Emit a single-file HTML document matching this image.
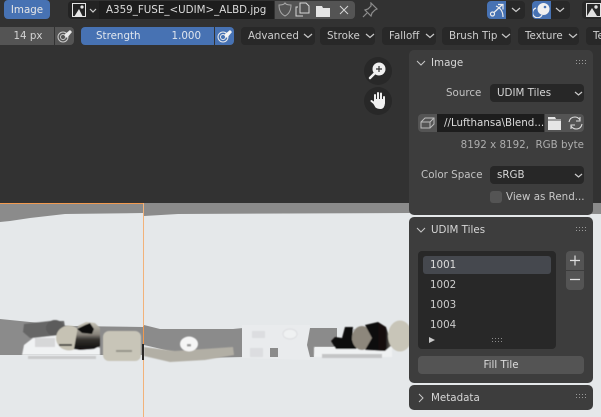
<!DOCTYPE html>
<html><head><meta charset="utf-8"><style>
*{box-sizing:border-box}
html,body{margin:0;padding:0}
body{width:601px;height:417px;overflow:hidden;background:#323232;position:relative;font-family:"DejaVu Sans",sans-serif;font-size:10.3px;color:#d6d6d6}
.a{position:absolute;white-space:nowrap}
.b{position:absolute;height:18px;background:#282828;border-radius:4px;line-height:18px;white-space:nowrap;color:#cecece;overflow:hidden}
.g{position:absolute;height:18px;background:#545454;line-height:18px;white-space:nowrap}
svg.o{position:absolute;left:0;top:0}
.p{position:absolute;left:409px;width:184px;background:#3d3d3d;border-radius:5px}
.t{position:absolute;white-space:nowrap;color:#d6d6d6}
</style></head><body>
<svg class="o" width="601" height="417" viewBox="0 0 601 417">
<defs><filter id="s" x="-5%" y="-5%" width="110%" height="110%"><feGaussianBlur stdDeviation="0.6"/></filter>
<linearGradient id="k" x1="0" y1="0" x2="1" y2="0"><stop offset="0" stop-color="#0d0b0a"/><stop offset=".75" stop-color="#141110"/><stop offset="1" stop-color="#8d877c"/></linearGradient>
<linearGradient id="h" x1="0" y1="0" x2="0" y2="1"><stop offset="0" stop-color="#c6c3b6"/><stop offset=".45" stop-color="#86827a"/><stop offset=".62" stop-color="#35322f"/><stop offset="1" stop-color="#0d0b0a"/></linearGradient></defs>
<rect x="0" y="47" width="601" height="156" fill="#323232"/>
<rect x="0" y="203" width="601" height="214" fill="#8b8b8b"/>
<polygon points="0,222 10,221 30,218 65,214 143,213 143,417 0,417" fill="#e5e8ea"/>
<polygon points="144,216 178,214 410,213 601,214 601,417 144,417" fill="#e5e8ea"/>
<polygon points="0,319 30,322 70,326 143,327 143,355 0,355" fill="#8b8b8b"/>
<polygon points="144,325 160,329 233,329 243,328 243,357 200,358 144,345" fill="#8b8b8b"/>
<polygon points="242,325 310,325 310,360 242,358" fill="#e9ebed"/>
<polygon points="310,328 337,328 337,347 315,347 314,357 310,357 307,345" fill="#8b8b8b"/>
<g filter="url(#s)">
<polygon points="144,347 175,351 233,347 234,355 205,360 170,362 144,356" fill="#b2afa5"/>
<polygon points="24,324 50,321 64,321 66,333 50,337 30,338 23,332" fill="#666"/>
<ellipse cx="55" cy="328" rx="9" ry="8" fill="#5c5c5c"/>
<polygon points="33,338 60,335 100,348 100,355 22,355 24,345" fill="#f0f2f3"/>
<rect x="35" y="338" width="20" height="9" fill="#d6d7d8"/>
<rect x="28" y="356" width="68" height="3" fill="#c9cacb"/>
<ellipse cx="69" cy="338" rx="13" ry="12.500" fill="#c6c2b4"/>
<rect x="59" y="344" width="13" height="2" fill="#4d4b46"/>
<polygon points="78,326 86,322 95,323 100,328 100,346 94,349 80,350 74,349" fill="url(#h)"/>
<polygon points="77,329 85,325 90,323 94,329 92,334 82,333" fill="#0c0b0a"/>
<rect x="103" y="331" width="38" height="30" rx="6" fill="#c8c5b8"/>
<rect x="116" y="350" width="16" height="2" fill="#96948a"/>
<rect x="252" y="331" width="13" height="7" fill="#dcdde0"/>
<rect x="250" y="348" width="13" height="9" fill="#dcdde0"/>
<ellipse cx="290" cy="334" rx="7" ry="5" fill="#eff1f2" stroke="#dcdde0"/>
<rect x="314" y="347" width="78" height="10" fill="#eff1f2"/>
<rect x="322" y="354" width="60" height="4" fill="#c4c5c6"/>
<polygon points="331,341 335,337 342,338 345,327 353,327 352,340 358,346 356,349 336,349" fill="#0f0d0c"/>
<ellipse cx="362" cy="338" rx="10" ry="12" fill="#8d877c"/>
<polygon points="365,325 378,322 386,327 392,345 385,351 365,350 372,338" fill="url(#k)"/>
<ellipse cx="354" cy="330" rx="1" ry="1" fill="#aaa"/>
<ellipse cx="400" cy="336" rx="12" ry="15.500" fill="#c8c5b8"/>
<ellipse cx="189" cy="344" rx="9" ry="7.500" fill="#f5f5f5"/>
<rect x="187" y="344" width="4" height="2.500" fill="#9a9a9a"/>
</g>
<rect x="270" y="348" width="8" height="9" fill="#8b8b8b"/>
<rect x="0" y="203" width="143" height="1" fill="#f29a50"/>
<rect x="143" y="203" width="1" height="214" fill="#f2b27a"/>
<rect x="143" y="326" width="1" height="18" fill="#f09a50"/>
<rect x="142" y="344" width="2" height="16" fill="#2a2826"/>
</svg>

<!-- top bar -->
<div class="a" style="left:0;top:0;width:601px;height:47px;background:#323232"></div>
<div class="a" style="left:4px;top:0;width:46px;height:19px;background:#4772b3;border-radius:4px;text-align:center;line-height:20px;color:#e6e6e6">Image</div>
<div class="a" style="left:68px;top:1px;width:32px;height:18px;background:#232323;border-radius:4px 0 0 4px"></div>
<svg class="a" style="left:71px;top:2px" width="28" height="16" viewBox="0 0 28 16"><path d="M1.500 1.500h13v13h-13z" fill="none" stroke="#e6e6e6"/><path d="M3 15l5-8 4 8z" fill="#e6e6e6"/><circle cx="11" cy="5" r="1.600" fill="#e6e6e6"/><path d="M19 7l3 3 3-3" fill="none" stroke="#ccc" stroke-width="1.200"/></svg>
<div class="a" style="left:99px;top:1px;width:175px;height:18px;background:#1d1d1d;line-height:19px;padding-left:7px;color:#dcdcdc;overflow:hidden">A359_FUSE_&lt;UDIM&gt;_ALBD.jpg</div>
<div class="a" style="left:275px;top:1px;width:80px;height:18px;background:#545454;border-radius:0 4px 4px 0"></div>
<svg class="a" style="left:276px;top:2px" width="90" height="16" viewBox="0 0 90 16" fill="none" stroke="#d6d6d6"><path d="M3 3q5 0 6-2q1 2 6 2q0 8-6 11q-6-3-6-11z" stroke="#a8a8a8"/><path d="M22 5h-2v9h7M24 1h6l3 3v7h-9z"/><path d="M40 4h6l1 2h7v9H40z" fill="#e4e4e4" stroke="none"/><path d="M64 4l8 8M72 4l-8 8"/></svg>
<svg class="a" style="left:362px;top:2px" width="16" height="16" viewBox="0 0 16 16" fill="none" stroke="#8d8d8d" stroke-width="1.200"><path d="M9 1l6 6-2 1-3 3-1 3-6-6 3-1 3-3zM5 11l-4 4"/></svg>

<div class="a" style="left:487px;top:1px;width:19px;height:18px;background:#4772b3;border-radius:4px 0 0 4px"></div>
<svg class="a" style="left:488px;top:2px" width="18" height="16" viewBox="0 0 18 16" fill="none" stroke="#eee" stroke-width="1.200"><circle cx="4.500" cy="12" r="2"/><path d="M6 10.500L14 3M10 2.500h5v5M8 4q7 3 7 11"/></svg>
<div class="a" style="left:506px;top:1px;width:19px;height:18px;background:#282828;border-radius:0 4px 4px 0"></div>
<svg class="a" style="left:511px;top:7px" width="10" height="6" viewBox="0 0 10 6"><path d="M1 1l4 3.500L9 1" fill="none" stroke="#ccc" stroke-width="1.200"/></svg>
<div class="a" style="left:532px;top:1px;width:19px;height:18px;background:#4772b3;border-radius:4px 0 0 4px"></div>
<svg class="a" style="left:533px;top:2px" width="18" height="16" viewBox="0 0 18 16"><circle cx="10.500" cy="7" r="6" fill="#f0f0f0"/><circle cx="12" cy="5" r="1.300" fill="#4772b3"/><path d="M3 6a5 5 0 1 0 6 7" fill="none" stroke="#eee" stroke-width="1.300"/></svg>
<div class="a" style="left:551px;top:1px;width:19px;height:18px;background:#282828;border-radius:0 4px 4px 0"></div>
<svg class="a" style="left:555px;top:7px" width="10" height="6" viewBox="0 0 10 6"><path d="M1 1l4 3.500L9 1" fill="none" stroke="#ccc" stroke-width="1.200"/></svg>
<div class="a" style="left:582px;top:1px;width:19px;height:18px;background:#282828;border-radius:4px 0 0 4px"></div>
<svg class="a" style="left:585px;top:2px" width="16" height="16" viewBox="0 0 16 16"><path d="M1.500 1.500h14v13h-14z" fill="#2a2a2a" stroke="#e2e2e2"/><path d="M2 14L7 6l5 8z" fill="#e2e2e2"/><circle cx="11" cy="5" r="1.700" fill="#e2e2e2"/></svg>

<!-- row 2 -->
<div class="g" style="left:0;top:27px;width:54px;background:#545454;text-align:center;color:#d4d4d4;padding-left:2px;line-height:19px">14 px</div>
<div class="g" style="left:55px;top:27px;width:19px;border-radius:0 4px 4px 0"></div>
<svg class="a" style="left:56px;top:28px" width="17" height="16" viewBox="0 0 17 16" fill="none" stroke="#ccc"><circle cx="7" cy="9" r="5"/><circle cx="7" cy="9" r="2.500"/><path d="M8 7l6-5 2 2-5 6z" fill="#e8e8e8" stroke="none"/></svg>
<div class="a" style="left:81px;top:27px;width:133px;height:18px;background:#4772b3;border-radius:4px 0 0 4px;line-height:19px;color:#e0e6ee"><span style="position:absolute;left:15px">Strength</span><span style="position:absolute;right:13px">1.000</span></div>
<div class="a" style="left:215px;top:27px;width:19px;height:18px;background:#4772b3;border-radius:0 4px 4px 0"></div>
<svg class="a" style="left:216px;top:28px" width="17" height="16" viewBox="0 0 17 16" fill="none" stroke="#eee"><circle cx="7" cy="9" r="5"/><circle cx="7" cy="9" r="2.500"/><path d="M8 7l6-5 2 2-5 6z" fill="#f4f4f4" stroke="none"/></svg>

<div class="b" style="left:241px;top:27px;width:74px;padding-left:7px;line-height:19px">Advanced</div>
<div class="b" style="left:320px;top:27px;width:55px;padding-left:7px;line-height:19px">Stroke</div>
<div class="b" style="left:382px;top:27px;width:54px;padding-left:7px;line-height:19px">Falloff</div>
<div class="b" style="left:442px;top:27px;width:69px;padding-left:7px;line-height:19px">Brush Tip</div>
<div class="b" style="left:518px;top:27px;width:61px;padding-left:7px;line-height:19px">Texture</div>
<div class="b" style="left:586px;top:27px;width:30px;padding-left:7px;line-height:19px">Te</div>
<svg class="a" style="left:0;top:27px" width="601" height="18" viewBox="0 0 601 18" fill="none" stroke="#c8c8c8" stroke-width="1.200"><path d="M304 7l4 3.500 4-3.500M366 7l4 3.500 4-3.500M426 7l4 3.500 4-3.500M502 7l4 3.500 4-3.500M569 7l4 3.500 4-3.500"/></svg>

<!-- gizmos -->
<div class="a" style="left:364px;top:57px;width:28px;height:28px;border-radius:14px;background:#282828"></div>
<div class="a" style="left:364px;top:87px;width:28px;height:28px;border-radius:14px;background:#282828"></div>
<svg class="a" style="left:364px;top:57px" width="28" height="58" viewBox="0 0 28 58"><circle cx="15" cy="12" r="6.500" fill="#f0f0f0"/><path d="M12 12h6M15 9v6" stroke="#333" stroke-width="1.200"/><path d="M10 17l-4 4" stroke="#f0f0f0" stroke-width="2.500" stroke-linecap="round"/><path d="M7.500 44l3 2.500M11 46v-8M14 45v-9M17 45v-8.500M20 46v-6" stroke="#f0f0f0" stroke-width="2" fill="none" stroke-linecap="round"/><path d="M7.500 43.500l4 7q2 1.500 5 1.500q4 0 4.500-6v-4h-10v3z" fill="#f0f0f0"/></svg>

<!-- Image panel -->
<div class="p" style="top:50px;height:165px"></div>
<svg class="a" style="left:416px;top:59px" width="180" height="10" viewBox="0 0 180 10" fill="none"><path d="M1 2l4 4 4-4" stroke="#c8c8c8"/><path d="M160 1.500h1M163 1.500h1M166 1.500h1M169 1.500h1M160 4.500h1M163 4.500h1M166 4.500h1M169 4.500h1" stroke="#9a9a9a"/></svg>
<div class="t" style="left:431px;top:56px;line-height:15px">Image</div>
<div class="t" style="left:446px;top:86px;line-height:15px;color:#c2c2c2">Source</div>
<div class="b" style="left:490px;top:84px;width:94px;padding-left:7px;background:#272727;color:#d6d6d6;line-height:19px">UDIM Tiles</div>
<div class="a" style="left:418px;top:114px;width:19px;height:18px;background:#545454;border-radius:4px 0 0 4px"></div>
<svg class="a" style="left:419px;top:116px" width="17" height="14" viewBox="0 0 17 14" fill="none" stroke="#bbb"><path d="M2 6l4-4h9v6l-4 4H2zM2 6h9v6M11 6l4-4"/></svg>
<div class="a" style="left:437px;top:114px;width:107px;height:18px;background:#1d1d1d;line-height:19px;padding-left:7px;color:#dcdcdc;overflow:hidden">//Lufthansa\Blend...</div>
<div class="a" style="left:545px;top:114px;width:39px;height:18px;background:#545454;border-radius:0 4px 4px 0"></div>
<svg class="a" style="left:546px;top:115px" width="38" height="16" viewBox="0 0 38 16"><path d="M2 2h7l1 2h5v11H2z" fill="#e6e6e6"/><path d="M2 5h13" stroke="#545454"/><path d="M23 7q1-5 6-5q3 0 5 3M36 9q-1 5-6 5q-3 0-5-3M34 2v4h-4M25 14v-4h4" fill="none" stroke="#ddd" stroke-width="1.100"/></svg>
<div class="t" style="right:17px;top:138px;line-height:15px;color:#adadad">8192 x 8192,&nbsp; RGB byte</div>
<div class="t" style="left:421px;top:168px;line-height:15px;color:#c2c2c2">Color Space</div>
<div class="b" style="left:490px;top:166px;width:94px;padding-left:7px;background:#272727;color:#d6d6d6;line-height:19px">sRGB</div>
<svg class="a" style="left:574px;top:90px" width="10" height="96" viewBox="0 0 10 96" fill="none" stroke="#ccc" stroke-width="1.200"><path d="M1 2l3.500 3L8 2M1 84l3.500 3L8 84"/></svg>
<div class="a" style="left:490px;top:191px;width:12px;height:12px;background:#545454;border-radius:3px"></div>
<div class="t" style="left:506px;top:190px;line-height:15px;color:#c8c8c8">View as Rend...</div>

<!-- UDIM panel -->
<div class="p" style="top:217px;height:166px"></div>
<svg class="a" style="left:416px;top:226px" width="180" height="10" viewBox="0 0 180 10" fill="none"><path d="M1 2l4 4 4-4" stroke="#c8c8c8"/><path d="M160 1.500h1M163 1.500h1M166 1.500h1M169 1.500h1M160 4.500h1M163 4.500h1M166 4.500h1M169 4.500h1" stroke="#9a9a9a"/></svg>
<div class="t" style="left:431px;top:223px;line-height:15px">UDIM Tiles</div>
<div class="a" style="left:418px;top:251px;width:138px;height:98px;background:#282828;border-radius:4px"></div>
<div class="a" style="left:423px;top:256px;width:128px;height:18px;background:#45484e;border-radius:3px"></div>
<div class="t" style="left:430px;top:258px;line-height:15px;color:#dcdcdc">1001</div>
<div class="t" style="left:430px;top:278px;line-height:15px;color:#cccccc">1002</div>
<div class="t" style="left:430px;top:298px;line-height:15px;color:#cccccc">1003</div>
<div class="t" style="left:430px;top:318px;line-height:15px;color:#cccccc">1004</div>
<svg class="a" style="left:428px;top:335px" width="82" height="12" viewBox="0 0 82 12" fill="none"><path d="M1 2v6l6-3z" fill="#c8c8c8"/><path d="M64 3.500h1M67 3.500h1M70 3.500h1M73 3.500h1M64 6.500h1M67 6.500h1M70 6.500h1M73 6.500h1" stroke="#8c8c8c"/></svg>
<div class="a" style="left:566px;top:251px;width:18px;height:19px;background:#545454;border-radius:4px 4px 0 0"></div>
<div class="a" style="left:566px;top:271px;width:18px;height:19px;background:#545454;border-radius:0 0 4px 4px"></div>
<svg class="a" style="left:566px;top:251px" width="18" height="39" viewBox="0 0 18 39" stroke="#e0e0e0" stroke-width="1.200"><path d="M4 9.500h10M9 4.500v10M4 28.500h10"/></svg>
<div class="a" style="left:418px;top:356px;width:166px;height:18px;background:#545454;border-radius:4px;text-align:center;line-height:19px;color:#dcdcdc">Fill Tile</div>

<!-- Metadata -->
<div class="p" style="top:385px;height:25px"></div>
<svg class="a" style="left:416px;top:393px" width="180" height="10" viewBox="0 0 180 10" fill="none"><path d="M3 1l4 4-4 4" stroke="#c8c8c8"/><path d="M160 1.500h1M163 1.500h1M166 1.500h1M169 1.500h1M160 4.500h1M163 4.500h1M166 4.500h1M169 4.500h1" stroke="#9a9a9a"/></svg>
<div class="t" style="left:431px;top:391px;line-height:15px">Metadata</div>
</body></html>
